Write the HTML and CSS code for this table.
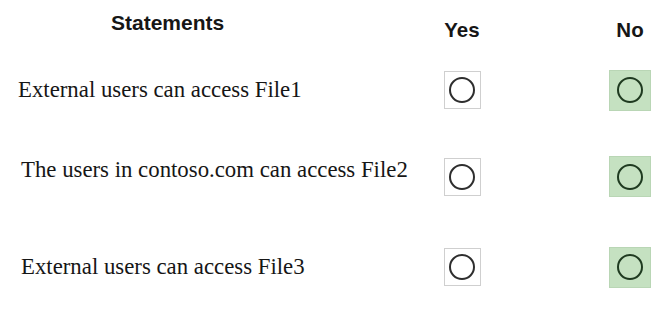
FILE: index.html
```html
<!DOCTYPE html>
<html lang="en">
<head>
  <meta charset="UTF-8">
  <title>Statements</title>
  <link rel="stylesheet" href="styles.css">
</head>
<body>
  <div class="sheet">
    <div class="head-row">
      <div class="head-stmt">Statements</div>
      <div class="head-cell">Yes</div>
      <div class="head-cell head-no">No</div>
    </div>

    <div class="row row-1">
      <div class="stmt stmt-first">External users can access File1</div>
      <div class="cell"><span class="box"><span class="dot"></span></span></div>
      <div class="cell cell-no"><span class="box picked"><span class="dot"></span></span></div>
    </div>

    <div class="row row-2">
      <div class="stmt stmt-raised">The users in contoso.com can access File2</div>
      <div class="cell"><span class="box"><span class="dot"></span></span></div>
      <div class="cell cell-no"><span class="box picked"><span class="dot"></span></span></div>
    </div>

    <div class="row row-3">
      <div class="stmt">External users can access File3</div>
      <div class="cell"><span class="box"><span class="dot"></span></span></div>
      <div class="cell cell-no"><span class="box picked"><span class="dot"></span></span></div>
    </div>
  </div>
</body>
</html>
```

FILE: styles.css
```css
html, body {
  margin: 0;
  padding: 0;
  background: #fff;
}
.sheet {
  width: 668px;
  height: 313px;
  color: #161616;
}
.head-row {
  display: flex;
  align-items: flex-start;
  height: 50px;
  font-family: 'Liberation Sans', Arial, sans-serif;
  font-weight: 700;
}
.head-stmt {
  width: 428px;
  padding: 11px 0 0 111px;
  box-sizing: border-box;
  font-size: 21px;
  line-height: 24px;
}
.head-cell {
  width: 68px;
  padding-top: 18px;
  text-align: center;
  font-size: 20.5px;
  line-height: 24px;
}
.head-no {
  margin-left: 100px;
}
.row {
  display: flex;
  align-items: center;
}
.row-1 { height: 80px; }
.row-2 { height: 93px; }
.row-3 { height: 88px; }
.stmt {
  width: 428px;
  padding-left: 21px;
  box-sizing: border-box;
  font-family: 'Liberation Serif', 'Times New Roman', serif;
  font-size: 22.8px;
  white-space: nowrap;
}
.stmt-first { padding-left: 18px; }
.stmt-raised { padding-bottom: 14px; }
.cell {
  width: 68px;
  display: flex;
  justify-content: center;
}
.cell-no {
  margin-left: 100px;
}
.box {
  width: 37px;
  height: 38px;
  box-sizing: border-box;
  border: 1px solid #cfcfcf;
  background: #fff;
  display: flex;
  align-items: center;
  justify-content: center;
}
.box.picked {
  width: 42px;
  height: 41px;
  border: 1px solid #b9d6b5;
  background: #c5e1c1;
}
.dot {
  width: 26px;
  height: 26px;
  box-sizing: border-box;
  border: 2px solid #2e2e2e;
  border-radius: 50%;
}
.picked .dot {
  border-color: #1f3a20;
}
```
